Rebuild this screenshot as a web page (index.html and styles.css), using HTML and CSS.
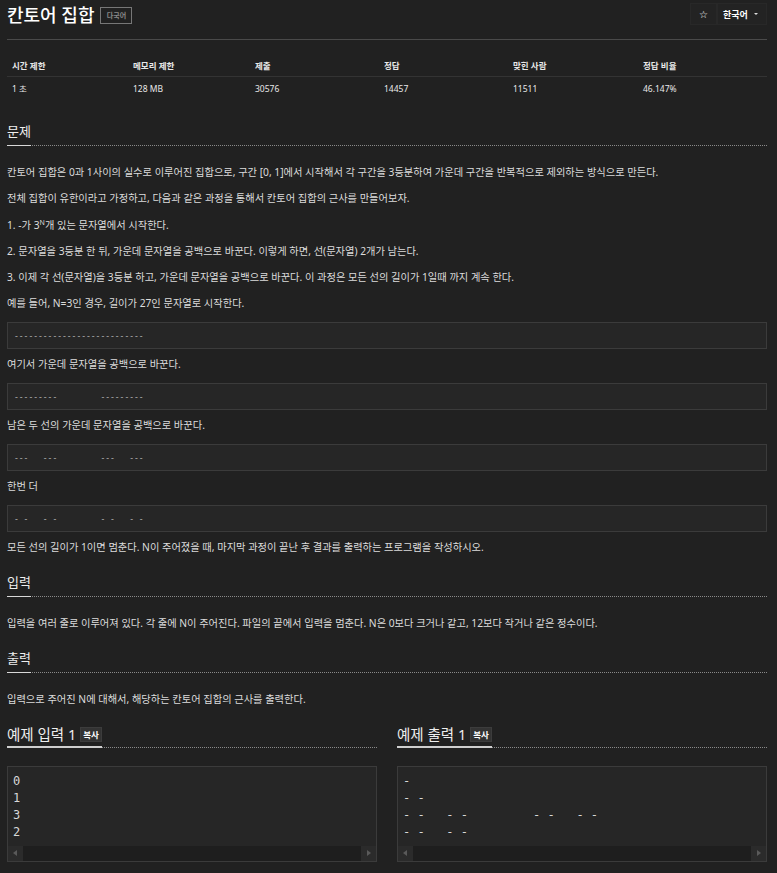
FILE: index.html
```html
<!DOCTYPE html>
<html lang="ko">
<head>
    <meta charset="UTF-8">
    <meta name="viewport" content="width=device-width, initial-scale=1.0">
    <title>칸토어 집합</title>
    <link rel="stylesheet" href="styles.css">
</head>
<body>
<div class="wrap">

    <!-- Title bar -->
    <div class="page-header">
        <h1 class="title">칸토어 집합 <span class="badge">다국어</span></h1>
        <div class="actions">
            <button class="btn star">&#9734;</button>
            <button class="btn lang">한국어 <span class="caret"></span></button>
        </div>
    </div>

    <!-- Limits table -->
    <table class="info">
        <colgroup>
            <col style="width:121px"><col style="width:122px"><col style="width:129px">
            <col style="width:129px"><col style="width:130px"><col>
        </colgroup>
        <thead>
            <tr><th>시간 제한</th><th>메모리 제한</th><th>제출</th><th>정답</th><th>맞힌 사람</th><th>정답 비율</th></tr>
        </thead>
        <tbody>
            <tr><td>1 초</td><td>128 MB</td><td>30576</td><td>14457</td><td>11511</td><td>46.147%</td></tr>
        </tbody>
    </table>

    <!-- Problem -->
    <section class="section first">
        <h2 class="headline"><span>문제</span></h2>
        <p>칸토어 집합은 0과 1사이의 실수로 이루어진 집합으로, 구간 [0, 1]에서 시작해서 각 구간을 3등분하여 가운데 구간을 반복적으로 제외하는 방식으로 만든다.</p>
        <p>전체 집합이 유한이라고 가정하고, 다음과 같은 과정을 통해서 칸토어 집합의 근사를 만들어보자.</p>
        <p class="with-sup">1. -가 3<sup>N</sup>개 있는 문자열에서 시작한다.</p>
        <p>2. 문자열을 3등분 한 뒤, 가운데 문자열을 공백으로 바꾼다. 이렇게 하면, 선(문자열) 2개가 남는다.</p>
        <p>3. 이제 각 선(문자열)을 3등분 하고, 가운데 문자열을 공백으로 바꾼다. 이 과정은 모든 선의 길이가 1일때 까지 계속 한다.</p>
        <p>예를 들어, N=3인 경우, 길이가 27인 문자열로 시작한다.</p>
        <pre class="example">---------------------------</pre>
        <p>여기서 가운데 문자열을 공백으로 바꾼다.</p>
        <pre class="example">---------         ---------</pre>
        <p>남은 두 선의 가운데 문자열을 공백으로 바꾼다.</p>
        <pre class="example">---   ---         ---   ---</pre>
        <p>한번 더</p>
        <pre class="example">- -   - -         - -   - -</pre>
        <p>모든 선의 길이가 1이면 멈춘다. N이 주어졌을 때, 마지막 과정이 끝난 후 결과를 출력하는 프로그램을 작성하시오.</p>
    </section>

    <!-- Input -->
    <section class="section">
        <h2 class="headline"><span>입력</span></h2>
        <p>입력을 여러 줄로 이루어져 있다. 각 줄에 N이 주어진다. 파일의 끝에서 입력을 멈춘다. N은 0보다 크거나 같고, 12보다 작거나 같은 정수이다.</p>
    </section>

    <!-- Output -->
    <section class="section">
        <h2 class="headline"><span>출력</span></h2>
        <p>입력으로 주어진 N에 대해서, 해당하는 칸토어 집합의 근사를 출력한다.</p>
    </section>

    <!-- Samples -->
    <section class="section samples">
        <div>
            <h2 class="headline sample-head"><span>예제 입력 1 <button class="copy">복사</button></span></h2>
            <div class="sample-box">
                <pre class="sample-data">0
1
3
2</pre>
                <div class="scrollbar"><span class="arrow left"></span><span class="arrow right"></span></div>
            </div>
        </div>
        <div>
            <h2 class="headline sample-head"><span>예제 출력 1 <button class="copy">복사</button></span></h2>
            <div class="sample-box">
                <pre class="sample-data">-
- -
- -   - -         - -   - -
- -   - -</pre>
                <div class="scrollbar"><span class="arrow left"></span><span class="arrow right"></span></div>
            </div>
        </div>
    </section>

</div>
</body>
</html>
```

FILE: styles.css
```css
body {
    margin: 0;
    background: #212121;
    color: #dcdcdc;
    font-family: "Noto Sans", "Noto Sans CJK KR", sans-serif;
    font-size: 10.25px;
}
.wrap {
    padding: 0 10px 20px 7px;
}

/* header */
.page-header {
    display: flex;
    justify-content: space-between;
    align-items: flex-start;
    height: 39px;
    border-bottom: 1px solid #4a4a4a;
}
.title {
    margin: 5px 0 0;
    font-size: 18px;
    line-height: 20px;
    font-weight: 500;
    color: #ffffff;
    display: flex;
    align-items: center;
}
.badge {
    margin-left: 6px;
    width: 30px;
    height: 15px;
    border: 1px solid #777;
    color: #8a8a8a;
    font-size: 7px;
    line-height: 15px;
    font-weight: bold;
    text-align: center;
}
.actions {
    display: flex;
    margin-top: 3px;
}
.btn {
    height: 22px;
    background: #232323;
    border: 1px solid #282828;
    color: #ffffff;
    font-family: inherit;
    font-weight: bold;
    padding: 0;
    margin: 0;
}
.star {
    width: 27px;
    font-family: "DejaVu Sans", sans-serif;
    font-size: 10px;
}
.lang {
    width: 50px;
    font-size: 9px;
    display: flex;
    align-items: center;
    padding-left: 5px;
}
.caret {
    display: inline-block;
    margin-left: 6px;
    border-left: 2px solid transparent;
    border-right: 2px solid transparent;
    border-top: 2px solid #ddd;
}

/* limits table */
.info {
    width: 100%;
    border-collapse: collapse;
    margin-top: 14px;
    table-layout: fixed;
}
.info th, .info td {
    text-align: left;
    padding: 0 5px;
    height: 22px;
    font-size: 8.5px;
    color: #e8e8e8;
}
.info th {
    font-weight: bold;
    border-bottom: 1px solid #333;
}

/* sections */
.section {
    margin-top: 17px;
}
.section.first {
    margin-top: 22px;
}
.headline {
    margin: 0 0 19px;
    font-size: 13px;
    line-height: 20px;
    font-weight: normal;
    color: #eeeeee;
    border-bottom: 1px dotted #8a8a8a;
    display: flex;
}
.headline span {
    padding-bottom: 4px;
    margin-bottom: -1px;
    border-bottom: 1px solid #d8d8d8;
    display: flex;
    align-items: center;
}
.section p {
    margin: 0 0 11px;
    line-height: 15px;
}
.section p.with-sup {
    line-height: 16px;
}
.section p:last-child {
    margin-bottom: 0;
}
sup {
    font-size: 7px;
    line-height: 0;
}
.example {
    margin: 0 0 8px;
    height: 25px;
    line-height: 25px;
    padding: 0 6px;
    background: #262626;
    border: 1px solid #3b3b3b;
    font-family: "Liberation Mono", monospace;
    font-size: 8px;
    color: #cfcfcf;
}

/* samples */
.samples {
    display: grid;
    grid-template-columns: 1fr 1fr;
    column-gap: 20px;
}
.sample-head {
    margin-bottom: 18px;
    font-size: 14.5px;
}
.sample-head span {
    border-bottom: 2px solid #cfcfcf;
    margin-bottom: -1px;
    padding-bottom: 2px;
}
.copy {
    margin-left: 4px;
    height: 15px;
    padding: 0 2px;
    background: #333;
    border: 1px solid #3c3c3c;
    color: #fff;
    font-family: inherit;
    font-size: 8.5px;
    font-weight: bold;
    line-height: 13px;
}
.sample-box {
    background: #262626;
    border: 1px solid #3b3b3b;
}
.sample-data {
    margin: 0;
    padding: 6px 5px 5px;
    font-family: "DejaVu Sans Mono", monospace;
    font-size: 12px;
    line-height: 17px;
    color: #d8d8d8;
}
.scrollbar {
    height: 15px;
    background: #1e1e1e;
    display: flex;
    justify-content: space-between;
}
.arrow {
    width: 15px;
    height: 15px;
    background: #2b2b2b;
    position: relative;
}
.arrow::after {
    content: "";
    position: absolute;
    top: 4px;
    border-top: 3px solid transparent;
    border-bottom: 3px solid transparent;
}
.arrow.left::after {
    left: 5px;
    border-right: 4px solid #5a5a5a;
}
.arrow.right::after {
    left: 6px;
    border-left: 4px solid #5a5a5a;
}
```
